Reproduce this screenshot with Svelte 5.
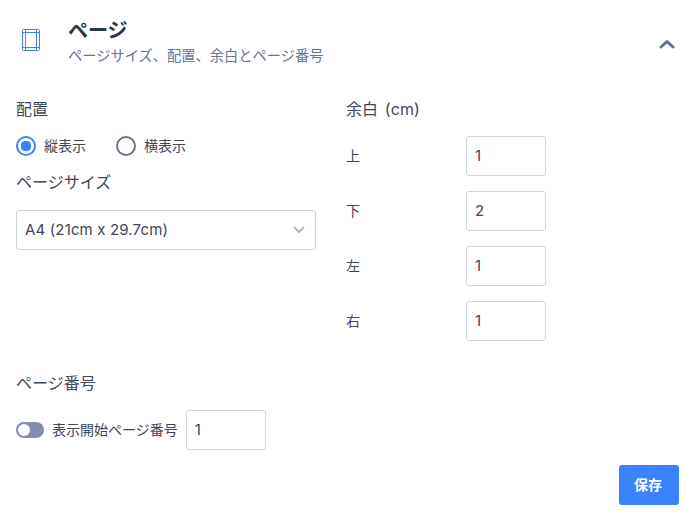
<script>
  let orientation = 'portrait';
  let size = 'A4 (21cm x 29.7cm)';
  let startFrom = false;

  const margins = [
    { label: '上', value: 1 },
    { label: '下', value: 2 },
    { label: '左', value: 1 },
    { label: '右', value: 1 }
  ];
</script>

<div class="panel">
  <header class="head">
    <div class="page-icon">
      <svg width="18" height="22" viewBox="0 0 18 22" fill="none" stroke="#3b82ff" stroke-width="1">
        <rect x="0.5" y="0.5" width="17" height="21" rx="1" />
        <path d="M3.5 0.5V21.5M14.5 0.5V21.5M0.5 3.5H17.5M0.5 18.5H17.5" />
      </svg>
    </div>
    <div class="titles">
      <h2>ページ</h2>
      <p>ページサイズ、配置、余白とページ番号</p>
    </div>
    <svg class="collapse" width="16" height="10" viewBox="0 0 16 10" fill="none" stroke="#5f6f94" stroke-width="3" stroke-linecap="round" stroke-linejoin="round">
      <path d="M2 8L8 2.5L14 8" />
    </svg>
  </header>

  <div class="columns">
    <div class="col-left">
      <div class="label">配置</div>
      <div class="radios">
        <button class="radio" class:on={orientation === 'portrait'} on:click={() => (orientation = 'portrait')}>
          <span class="dot"></span>縦表示
        </button>
        <button class="radio" class:on={orientation === 'landscape'} on:click={() => (orientation = 'landscape')}>
          <span class="dot"></span>横表示
        </button>
      </div>
      <div class="label">ページサイズ</div>
      <div class="select">
        <span class="select-value">{size}</span>
        <svg width="12" height="8" viewBox="0 0 12 8" fill="none" stroke="#a9b4c4" stroke-width="1.8" stroke-linecap="round" stroke-linejoin="round">
          <path d="M1.5 1.5L6 6L10.5 1.5" />
        </svg>
      </div>
    </div>

    <div class="col-right">
      <div class="label margin-title">余白 (cm)</div>
      <div class="margins">
        {#each margins as m}
          <div class="margin-row">
            <span class="side">{m.label}</span>
            <input class="num" value={m.value} />
          </div>
        {/each}
      </div>
    </div>
  </div>

  <section class="numbering">
    <div class="label">ページ番号</div>
    <div class="number-row">
      <button class="toggle" class:on={startFrom} aria-label="表示開始ページ番号" on:click={() => (startFrom = !startFrom)}>
        <span class="knob"></span>
      </button>
      <span class="toggle-text">表示開始ページ番号</span>
      <input class="num" value="1" />
    </div>
  </section>

  <footer class="foot">
    <button class="save">保存</button>
  </footer>
</div>

<style>
  :global(body) {
    margin: 0;
    background: #fff;
  }

  .panel {
    width: 695px;
    height: 520px;
    box-sizing: border-box;
    padding: 17px 16px 0 16px;
    font-family: Inter, "Noto Sans CJK JP", sans-serif;
    color: #3f4656;
    overflow: hidden;
  }

  .head {
    display: flex;
    align-items: flex-start;
  }

  .page-icon {
    width: 52px;
    padding: 12px 0 0 6px;
    box-sizing: border-box;
    line-height: 0;
  }

  .titles {
    flex: 1;
  }

  h2 {
    margin: 0;
    font-size: 20px;
    line-height: 28px;
    font-weight: 700;
    color: #2c3344;
  }

  p {
    margin: 2px 0 0;
    font-size: 14.25px;
    line-height: 18px;
    color: #66748f;
  }

  .collapse {
    margin: 22px 4px 0 0;
  }

  .columns {
    display: flex;
    margin-top: 35px;
  }

  .col-left {
    width: 300px;
    margin-right: 30px;
  }

  .label {
    font-size: 16px;
    line-height: 18px;
    padding-bottom: 2px;
  }

  .margin-title {
    word-spacing: 2px;
    letter-spacing: 0.1px;
  }

  .radios {
    display: flex;
    gap: 30px;
    margin: 16px 0 17px;
  }

  .radio {
    display: flex;
    align-items: center;
    gap: 8px;
    padding: 0;
    border: 0;
    background: none;
    font: inherit;
    font-size: 14px;
    line-height: 20px;
    color: inherit;
  }

  .dot {
    width: 20px;
    height: 20px;
    box-sizing: border-box;
    border: 2px solid #66748f;
    border-radius: 50%;
  }

  .radio.on .dot {
    border-color: #3b82ff;
    background: radial-gradient(circle, #3b82ff 0 5px, #fff 5.6px);
  }

  .select {
    display: flex;
    align-items: center;
    justify-content: space-between;
    height: 40px;
    margin-top: 17px;
    padding: 0 10px 0 8px;
    box-sizing: border-box;
    border: 1px solid #ccd6dd;
    border-radius: 3px;
    font-size: 15px;
    letter-spacing: 0.15px;
  }

  .select-value {
    padding-bottom: 2px;
  }

  .margins {
    display: flex;
    flex-direction: column;
    gap: 15px;
    margin-top: 16px;
  }

  .margin-row {
    display: flex;
    align-items: center;
  }

  .side {
    width: 120px;
    padding-bottom: 2px;
    font-size: 14px;
  }

  .num {
    width: 80px;
    height: 40px;
    box-sizing: border-box;
    padding: 0 8px 2px;
    border: 1px solid #ccd6dd;
    border-radius: 3px;
    font: inherit;
    font-size: 15px;
    color: inherit;
    outline: none;
  }

  .numbering {
    margin-top: 33px;
  }

  .number-row {
    display: flex;
    align-items: center;
    margin-top: 16px;
  }

  .toggle {
    position: relative;
    width: 28px;
    height: 16px;
    padding: 0;
    border: 0;
    border-radius: 8px;
    background: #838daa;
  }

  .knob {
    position: absolute;
    left: 2px;
    top: 2px;
    width: 12px;
    height: 12px;
    border-radius: 50%;
    background: #fff;
  }

  .toggle.on {
    background: #3b82ff;
  }

  .toggle.on .knob {
    left: 14px;
  }

  .toggle-text {
    margin: 0 8px 0 8px;
    padding-bottom: 2px;
    font-size: 14px;
  }

  .foot {
    display: flex;
    justify-content: flex-end;
    margin-top: 15px;
  }

  .save {
    width: 60px;
    height: 40px;
    padding: 0 2px 2px 0;
    border: 0;
    border-radius: 3px;
    background: #3b82ff;
    color: #fff;
    font: inherit;
    font-size: 14px;
    font-weight: 700;
  }
</style>
